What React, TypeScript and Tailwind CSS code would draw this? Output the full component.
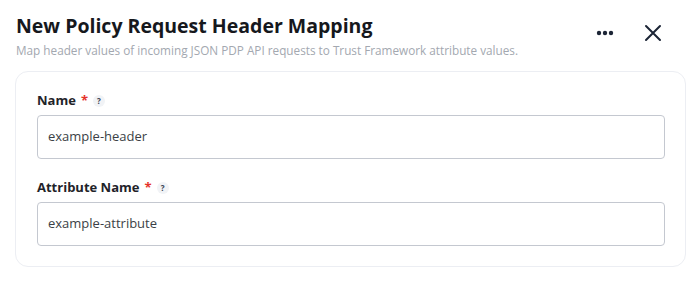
import React from "react";

function Help() {
  return (
    <span className="ml-[5px] inline-flex h-[12px] w-[12px] items-center justify-center rounded-full bg-[#f1f3f6] text-[8px] font-bold leading-none text-[#374151]">
      ?
    </span>
  );
}

function Field({ label, value }: { label: string; value: string }) {
  return (
    <div className="flex flex-col">
      <div className="flex h-[20px] items-center text-[13px] font-bold text-[#1f2329]">
        <span>{label}</span>
        <span className="ml-[5px] text-[#e5332a]">*</span>
        <Help />
      </div>
      <div className="mt-[4px] flex h-[44px] items-center rounded-[4px] border border-[#c4c8d0] bg-white px-[10px] text-[13px] text-[#3b3f46]">
        {value}
      </div>
    </div>
  );
}

export default function App() {
  return (
    <div
      className="h-[286px] w-[700px] bg-white"
      style={{ fontFamily: '"Open Sans", "Noto Sans", sans-serif' }}
    >
      <div className="flex items-start justify-between pl-[16px] pr-[38px] pt-[12px]">
        <div>
          <h1 className="text-[19.5px] font-bold leading-[28px] text-[#16181d]">
            New Policy Request Header Mapping
          </h1>
          <p className="mt-[2px] text-[11.75px] leading-[16px] text-[#a3a8b0]">
            Map header values of incoming JSON PDP API requests to Trust Framework attribute values.
          </p>
        </div>
        <div className="mt-[12px] flex items-center gap-[30px]">
          <svg width="18" height="6" viewBox="0 0 18 6">
            <circle cx="3" cy="3" r="2.2" fill="#1c2536" />
            <circle cx="9" cy="3" r="2.2" fill="#1c2536" />
            <circle cx="15" cy="3" r="2.2" fill="#1c2536" />
          </svg>
          <svg width="18" height="18" viewBox="0 0 18 18">
            <path d="M2 2 L16 16 M16 2 L2 16" stroke="#1c2536" strokeWidth="2" strokeLinecap="round" />
          </svg>
        </div>
      </div>
      <div className="ml-[15px] mr-[14px] mt-[13px] flex flex-col gap-[19px] rounded-[13px] border border-[#eceef3] pb-[20px] pl-[21px] pr-[20px] pt-[19px]">
        <Field label="Name" value="example-header" />
        <Field label="Attribute Name" value="example-attribute" />
      </div>
    </div>
  );
}
